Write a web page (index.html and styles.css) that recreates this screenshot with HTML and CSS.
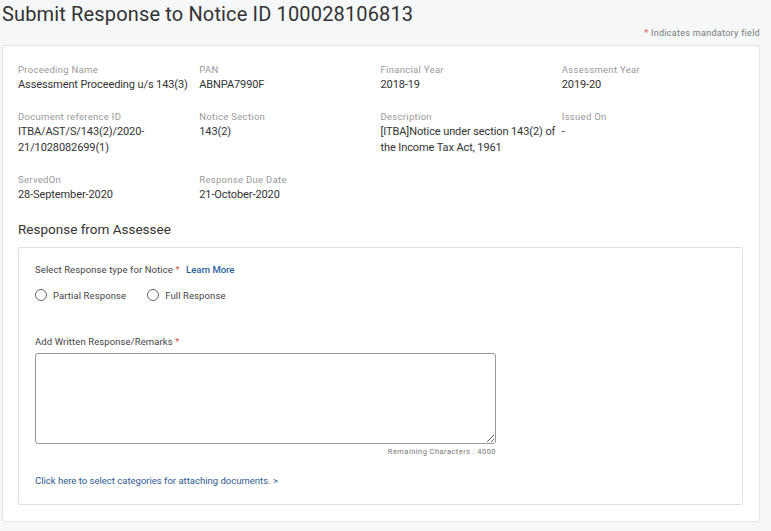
FILE: index.html
```html
<!DOCTYPE html>
<html lang="en">
<head>
    <meta charset="UTF-8">
    <meta name="viewport" content="width=device-width, initial-scale=1.0">
    <title>Submit Response</title>
    <link rel="stylesheet" href="styles.css">
</head>
<body>
    <div class="page">
        <h1 class="title">Submit Response to Notice ID 100028106813</h1>
        <div class="mandatory"><span class="star">*</span> Indicates mandatory field</div>

        <div class="card">
            <div class="details">
                <div class="field">
                    <div class="label">Proceeding Name</div>
                    <div class="value">Assessment Proceeding u/s 143(3)</div>
                </div>
                <div class="field">
                    <div class="label">PAN</div>
                    <div class="value">ABNPA7990F</div>
                </div>
                <div class="field">
                    <div class="label">Financial Year</div>
                    <div class="value">2018-19</div>
                </div>
                <div class="field">
                    <div class="label">Assessment Year</div>
                    <div class="value">2019-20</div>
                </div>

                <div class="field">
                    <div class="label">Document reference ID</div>
                    <div class="value">ITBA/AST/S/143(2)/2020-21/1028082699(1)</div>
                </div>
                <div class="field">
                    <div class="label">Notice Section</div>
                    <div class="value">143(2)</div>
                </div>
                <div class="field">
                    <div class="label">Description</div>
                    <div class="value">[ITBA]Notice under section 143(2) of the Income Tax Act, 1961</div>
                </div>
                <div class="field">
                    <div class="label">Issued On</div>
                    <div class="value">-</div>
                </div>

                <div class="field">
                    <div class="label">ServedOn</div>
                    <div class="value">28-September-2020</div>
                </div>
                <div class="field">
                    <div class="label">Response Due Date</div>
                    <div class="value">21-October-2020</div>
                </div>
            </div>

            <h2 class="section-title">Response from Assessee</h2>

            <div class="inner-card">
                <div class="form-label">Select Response type for Notice <span class="star">*</span> <a class="learn-more" href="#">Learn More</a></div>
                <div class="radios">
                    <label class="radio"><input type="radio" name="rtype"><span>Partial Response</span></label>
                    <label class="radio"><input type="radio" name="rtype"><span>Full Response</span></label>
                </div>

                <div class="form-label remarks-label">Add Written Response/Remarks <span class="star">*</span></div>
                <div class="remarks">
                    <textarea></textarea>
                    <div class="remaining">Remaining Characters : 4000</div>
                </div>

                <a class="attach-link" href="#">Click here to select categories for attaching documents. &gt;</a>
            </div>
        </div>
    </div>
</body>
</html>
```

FILE: styles.css
```css
* {
    margin: 0;
    padding: 0;
    box-sizing: border-box;
}

html, body {
    height: 100%;
    background-color: #f6f7f9;
}

body {
    font-family: Roboto, "Liberation Sans", Arial, sans-serif;
    color: #333;
}

.page {
    padding: 2px 11px 10px 2px;
}

.title {
    font-size: 20px;
    font-weight: 400;
    color: #333;
    line-height: 24px;
    letter-spacing: 0.15px;
}

.mandatory {
    text-align: right;
    font-size: 9px;
    color: #777;
    letter-spacing: 0.3px;
    margin-top: 1px;
    line-height: 12px;
}

.star {
    color: #d9534f;
}

.card {
    margin-top: 6px;
    background: white;
    border: 1px solid #e2e3e6;
    border-radius: 3px;
    padding: 17px 16px 16px 15px;
}

.details {
    display: grid;
    grid-template-columns: repeat(4, 1fr);
    row-gap: 17px;
}

.label {
    font-size: 9.5px;
    color: #999;
    letter-spacing: 0.3px;
    line-height: 13px;
}

.value {
    font-size: 11px;
    color: #333;
    line-height: 16px;
    margin-top: 1px;
    letter-spacing: -0.1px;
}

.section-title {
    font-size: 13.5px;
    font-weight: 400;
    color: #333;
    margin-top: 17px;
    line-height: 18px;
}

.inner-card {
    margin-top: 9px;
    border: 1px solid #e0e0e0;
    border-radius: 2px;
    padding: 15px 16px 16px 16px;
}

.form-label {
    font-size: 9.5px;
    color: #444;
    line-height: 13px;
    letter-spacing: 0.1px;
}

.learn-more {
    color: #2b5f9e;
    font-weight: 500;
    text-decoration: none;
    margin-left: 4px;
    letter-spacing: 0;
}

.radios {
    display: flex;
    gap: 21px;
    margin-top: 13px;
}

.radio {
    display: flex;
    align-items: center;
    gap: 6px;
    font-size: 9.5px;
    color: #444;
    letter-spacing: 0.1px;
}

.radio input {
    appearance: none;
    width: 12px;
    height: 12px;
    border: 1px solid #666;
    border-radius: 50%;
    background: white;
    margin: 0;
}

.remarks-label {
    margin-top: 34px;
}

.remarks {
    width: 461px;
    margin-top: 5px;
}

.remarks textarea {
    display: block;
    width: 100%;
    height: 91px;
    border: 1px solid #999;
    border-radius: 3px;
    resize: vertical;
}

.remaining {
    text-align: right;
    font-size: 7.5px;
    color: #777;
    letter-spacing: 0.45px;
    margin-top: 3px;
}

.attach-link {
    display: inline-block;
    margin-top: 19px;
    font-size: 9.5px;
    color: #2c5a92;
    text-decoration: none;
}
```
